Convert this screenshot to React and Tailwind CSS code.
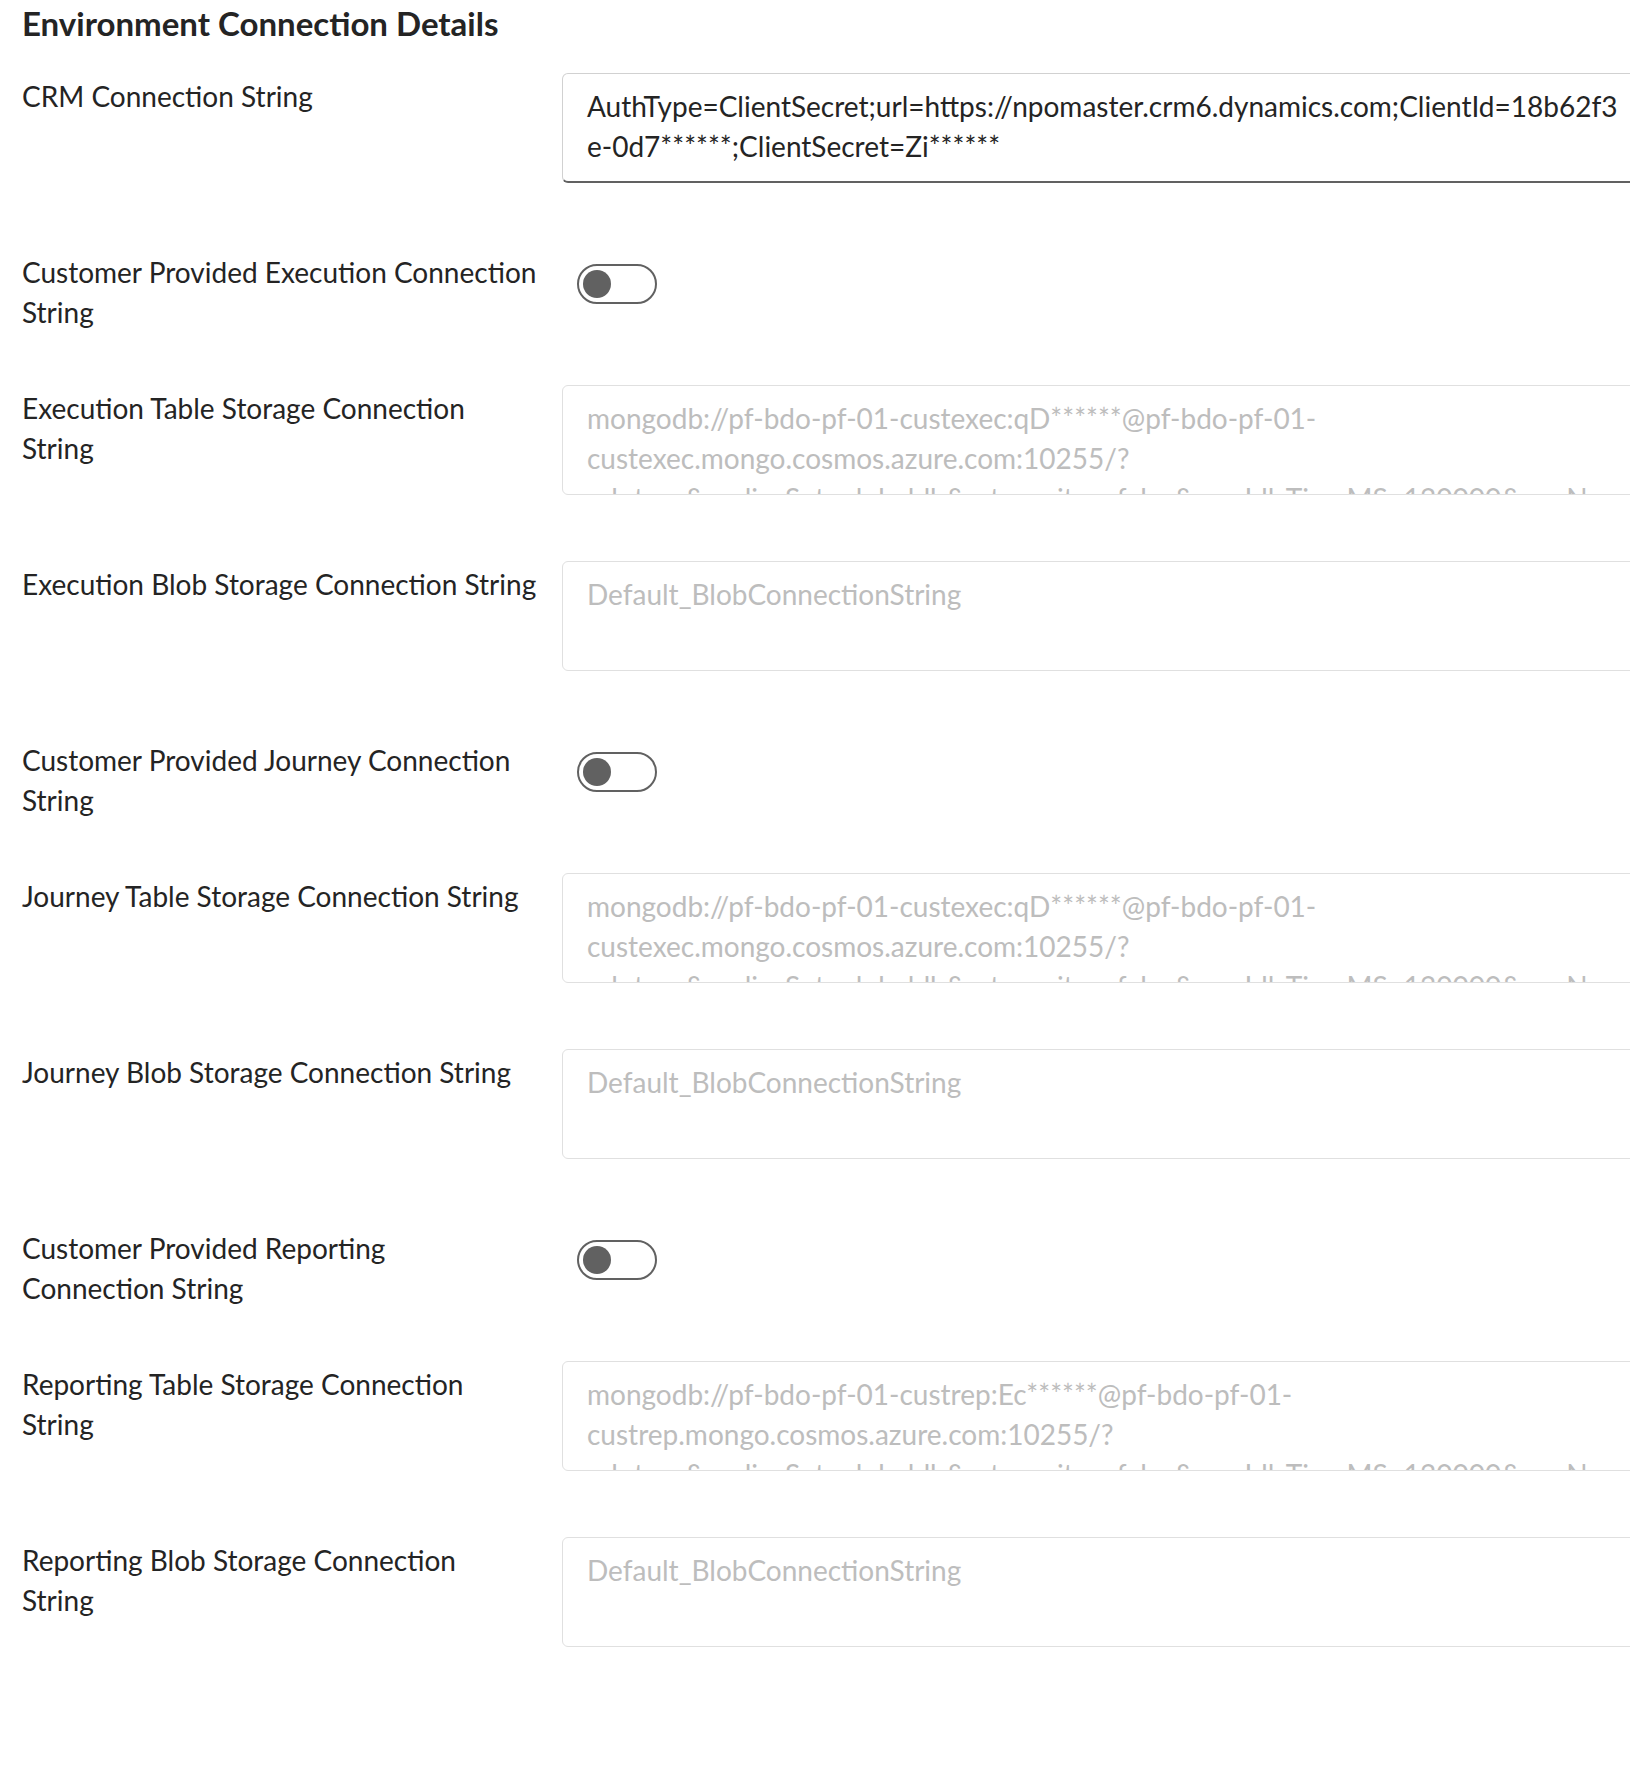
import React from 'react';

const FONT = "font-['Segoe_UI',Lato,'Open_Sans',sans-serif]";

const ROWS = [
  {
    type: 'field',
    label: ['CRM Connection String'],
    lines: [
      'AuthType=ClientSecret;url=https://npomaster.crm6.dynamics.com;ClientId=18b62f3',
      'e-0d7******;ClientSecret=Zi******'
    ],
    enabled: true
  },
  { type: 'toggle', label: ['Customer Provided Execution Connection', 'String'] },
  {
    type: 'field',
    label: ['Execution Table Storage Connection', 'String'],
    lines: [
      'mongodb://pf-bdo-pf-01-custexec:qD******@pf-bdo-pf-01-',
      'custexec.mongo.cosmos.azure.com:10255/?',
      'ssl=true&replicaSet=globaldb&retrywrites=false&maxIdleTimeMS=120000&appName=@pf-bdo-pf-01-custexec@'
    ]
  },
  {
    type: 'field',
    label: ['Execution Blob Storage Connection String'],
    lines: ['Default_BlobConnectionString']
  },
  { type: 'toggle', label: ['Customer Provided Journey Connection', 'String'] },
  {
    type: 'field',
    label: ['Journey Table Storage Connection String'],
    lines: [
      'mongodb://pf-bdo-pf-01-custexec:qD******@pf-bdo-pf-01-',
      'custexec.mongo.cosmos.azure.com:10255/?',
      'ssl=true&replicaSet=globaldb&retrywrites=false&maxIdleTimeMS=120000&appName=@pf-bdo-pf-01-custexec@'
    ]
  },
  {
    type: 'field',
    label: ['Journey Blob Storage Connection String'],
    lines: ['Default_BlobConnectionString']
  },
  { type: 'toggle', label: ['Customer Provided Reporting', 'Connection String'] },
  {
    type: 'field',
    label: ['Reporting Table Storage Connection', 'String'],
    lines: [
      'mongodb://pf-bdo-pf-01-custrep:Ec******@pf-bdo-pf-01-',
      'custrep.mongo.cosmos.azure.com:10255/?',
      'ssl=true&replicaSet=globaldb&retrywrites=false&maxIdleTimeMS=120000&appName=@pf-bdo-pf-01-custrep@'
    ]
  },
  {
    type: 'field',
    label: ['Reporting Blob Storage Connection', 'String'],
    lines: ['Default_BlobConnectionString']
  }
];

const Label = ({ lines }) => (
  <div className="w-[540px] shrink-0 pt-[3px] text-[28px] leading-[40px] text-[#242424] whitespace-nowrap">
    {lines.map((l, i) => (
      <div key={i}>{l}</div>
    ))}
  </div>
);

const Toggle = () => (
  <div className="ml-[15px] mt-[15px] flex h-[40px] w-[80px] items-center rounded-full border-2 border-[#616161] bg-white px-[4px]">
    <div className="h-[28px] w-[28px] rounded-full bg-[#616161]" />
  </div>
);

const Field = ({ lines, enabled }) => (
  <div
    className={`h-[110px] w-[1120px] shrink-0 overflow-hidden rounded-[6px] border bg-white px-[24px] pt-[12px] text-[28px] leading-[40px] whitespace-nowrap ${
      enabled
        ? 'border-[#d1d1d1] border-b-2 border-b-[#616161] text-[#242424]'
        : 'border-[#e0e0e0] text-[#bdbdbd]'
    }`}
  >
    {lines.map((l, i) => (
      <div key={i}>{l}</div>
    ))}
  </div>
);

const App = () => {
  return (
    <div className={`${FONT} min-h-[1780px] w-[1630px] overflow-hidden bg-white pl-[22px]`}>
      <h2 className="pt-[3px] mb-[30px] text-[33px] leading-[40px] font-bold text-[#242424]">
        Environment Connection Details
      </h2>

      {ROWS.map((row, i) =>
        row.type === 'toggle' ? (
          <div key={i} className="flex h-[136px]">
            <Label lines={row.label} />
            <Toggle />
          </div>
        ) : (
          <div key={i} className="flex h-[176px]">
            <Label lines={row.label} />
            <Field lines={row.lines} enabled={row.enabled} />
          </div>
        )
      )}
    </div>
  );
};

export default App;
